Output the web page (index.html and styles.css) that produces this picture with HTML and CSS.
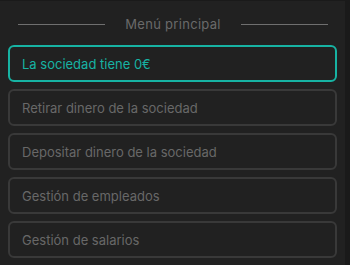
FILE: index.html
```html
<!DOCTYPE html>
<html lang="es">
<head>
<meta charset="utf-8">
<link rel="stylesheet" href="styles.css">
</head>
<body>
<div class="panel">
  <div class="title-row">
    <span class="line"></span>
    <span class="title">Menú principal</span>
    <span class="line"></span>
  </div>
  <div class="menu">
    <div class="item active">La sociedad tiene 0€</div>
    <div class="item">Retirar dinero de la sociedad</div>
    <div class="item">Depositar dinero de la sociedad</div>
    <div class="item">Gestión de empleados</div>
    <div class="item">Gestión de salarios</div>
  </div>
</div>
</body>
</html>
```
FILE: styles.css
```css
html, body {
  margin: 0;
  padding: 0;
  background: #1a1a1a;
  width: 350px;
  height: 265px;
  overflow: hidden;
}
body {
  font-family: "Inter", "Lato", sans-serif;
}
.panel {
  margin-top: 1px;
  width: 345px;
  height: 264px;
  box-sizing: border-box;
  background: #212121;
  padding: 14px 8px 0 8px;
}
.title-row {
  display: flex;
  align-items: center;
  gap: 20px;
  height: 18px;
  margin: 0 9px 0 10px;
}
.line {
  flex: 1;
  height: 1px;
  background: #6f6f6f;
}
.title {
  font-size: 13px;
  letter-spacing: 0.3px;
  color: #6a6a6a;
  white-space: nowrap;
}
.menu {
  margin-top: 12px;
  display: flex;
  flex-direction: column;
  gap: 7px;
}
.item {
  height: 37px;
  box-sizing: border-box;
  border: 2px solid #393939;
  border-radius: 6px;
  padding: 0 12px;
  display: flex;
  align-items: center;
  font-size: 13px;
  color: #686868;
}
.item.active {
  border-color: #17b3a3;
  color: #17b3a3;
}
```
